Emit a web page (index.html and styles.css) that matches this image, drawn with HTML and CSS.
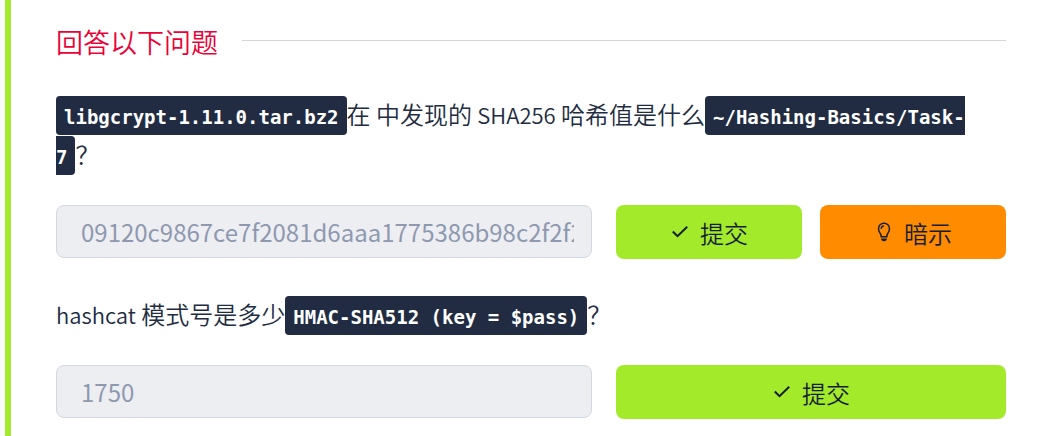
FILE: index.html
```html
<!DOCTYPE html>
<html lang="zh-CN">
<head>
<meta charset="utf-8">
<meta name="viewport" content="width=device-width, initial-scale=1">
<title>回答以下问题</title>
<link rel="stylesheet" href="styles.css">
</head>
<body>
<main class="task">
  <h2 class="heading"><span class="heading-text">回答以下问题</span></h2>
  <form class="question">
    <label class="prompt" for="answer-1"><code>libgcrypt-1.11.0.tar.bz2</code>在 中发现的 <span class="latin">SHA256</span> 哈希值是什么<code>~/Hashing-Basics/Task-7</code>？</label>
    <div class="row">
      <input class="answer" id="answer-1" type="text" readonly value="09120c9867ce7f2081d6aaa1775386b98c2f2f246135761ce47d81f58685b9c">
      <div class="actions">
        <button class="btn submit" type="button"><svg class="icon" viewBox="0 0 20 20" aria-hidden="true"><path d="M2.800 9.500l4.700 4.700L17.200 4.800"/></svg>提交</button>
        <button class="btn hint" type="button"><svg class="icon" viewBox="0 0 20 20" aria-hidden="true"><path d="M7.300 14.500C7.300 11.500 4.500 10.500 4.500 6.700a5.500 5.500 0 0 1 11 0c0 3.800-2.800 4.800-2.800 7.800M7.200 6.700q.2-2.400 2.600-2.600"/><path class="solid" d="M6.500 14h7v1.500h-7zM7 16.500h6q-.3 2.700-3 2.700t-3-2.700z"/></svg>暗示</button>
      </div>
    </div>
  </form>
  <form class="question">
    <label class="prompt" for="answer-2"><span class="latin">hashcat</span> 模式号是多少<code>HMAC-SHA512 (key = $pass)</code>？</label>
    <div class="row">
      <input class="answer" id="answer-2" type="text" readonly value="1750">
      <div class="actions">
        <button class="btn submit" type="button"><svg class="icon" viewBox="0 0 20 20" aria-hidden="true"><path d="M2.800 9.500l4.700 4.700L17.200 4.800"/></svg>提交</button>
      </div>
    </div>
  </form>
</main>
</body>
</html>
```
FILE: styles.css
```css
* { box-sizing: border-box; }
body { margin: 0; background: #f9f9fb; color: #212c42; font: 350 24px/40px "Noto Sans CJK SC", sans-serif; }
.task { min-height: 100vh; margin-left: 5px; border-left: 6px solid #a3ea2a; padding: 20px 45px 17px; background: #fff; }
.heading { display: flex; align-items: center; gap: 24px; margin: 0 0 34px; color: #eb0037; font-size: 27px; font-weight: 350; line-height: 36px; }
.heading-text { padding-top: 4px; }
.heading::after { content: ""; flex: 1; height: 1px; background: #d3d6dd; }
.question { margin: 0 0 35px; }
.question:last-child { margin: 0; }
.prompt { display: block; margin-bottom: 31px; padding-right: 32px; }
.latin { font-size: 22px; }
code { padding: 10px 8px 7px; border-radius: 4px; background: #212c42; color: #fff; font: 700 19px/24px "DejaVu Sans Mono", monospace; }
.row { display: grid; grid-template-columns: 536fr 390fr; gap: 24px; align-items: start; }
.answer { width: 100%; height: 53px; padding: 0 17px 0 24px; border: 1px solid #d3d8e0; border-radius: 8px; background: #edeef2; color: #8e99b0; font: 400 24px "Noto Sans CJK SC", sans-serif; }
.actions { display: flex; gap: 18px; }
.btn { display: flex; flex: 1; align-items: center; justify-content: center; gap: 10px; height: 54px; padding: 0; border: 0; border-radius: 8px; color: #151c2b; font: 350 24px "Noto Sans CJK SC", sans-serif; }
.submit { background: #a3ea2a; }
.hint { background: #ff8b00; }
.icon { width: 20px; height: 20px; fill: none; stroke: currentColor; stroke-width: 2; }
.hint .icon { stroke-width: 1.5; }
.icon .solid { fill: currentColor; stroke: none; }
```
